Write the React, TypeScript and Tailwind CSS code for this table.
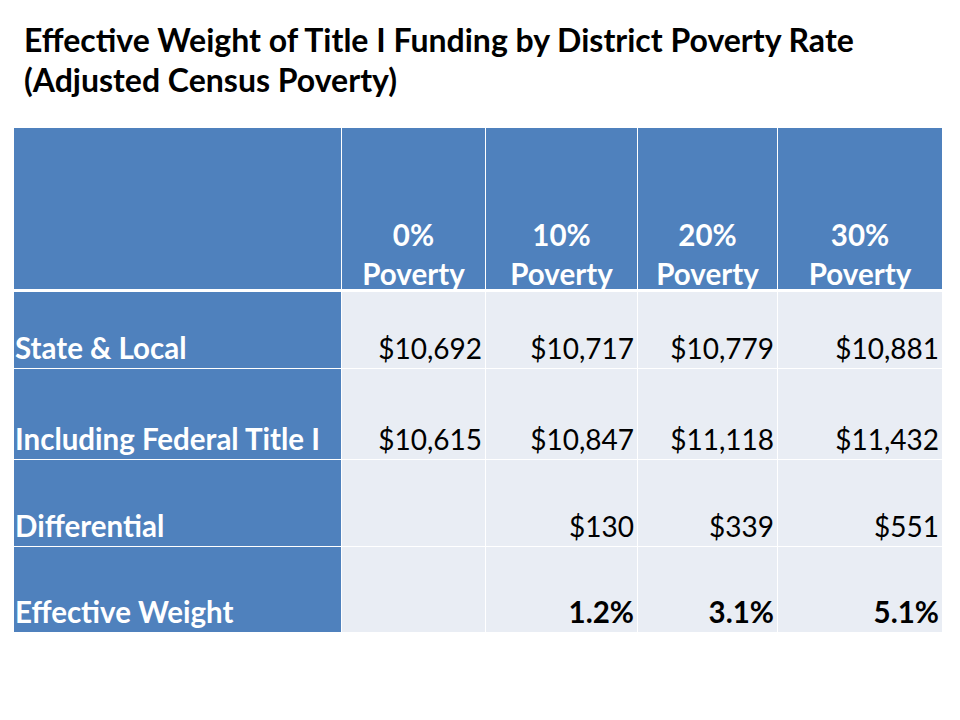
const cols = ["0%", "10%", "20%", "30%"];

type Row = {
  label: string;
  values: string[];
  height: string;
  bold?: boolean;
};

const rows: Row[] = [
  { label: "State & Local", values: ["$10,692", "$10,717", "$10,779", "$10,881"], height: "h-[76px]" },
  { label: "Including Federal Title I", values: ["$10,615", "$10,847", "$11,118", "$11,432"], height: "h-[90px]" },
  { label: "Differential", values: ["", "$130", "$339", "$551"], height: "h-[86px]" },
  { label: "Effective Weight", values: ["", "1.2%", "3.1%", "5.1%"], height: "h-[85px]", bold: true },
];

const grid = "grid grid-cols-[327px_143px_151px_139px_164px] gap-x-px";

export default function App() {
  return (
    <div className="w-[960px] h-[720px] bg-white font-['Lato','Liberation_Sans',sans-serif]">
      {/* title */}
      <h1 className="pl-[24px] pt-[20px] text-[32px] leading-[40px] font-bold text-black whitespace-nowrap">
        Effective Weight of Title I Funding by District Poverty Rate
        <br />
        (Adjusted Census Poverty)
      </h1>

      {/* table */}
      <div className="ml-[14px] mt-[28px] w-[928px] bg-white">
        {/* header */}
        <div className={grid}>
          <div className="h-[161px] bg-[#4f81bd]" />
          {cols.map((c) => (
            <div
              key={c}
              className="h-[161px] bg-[#4f81bd] flex flex-col justify-end items-center text-white font-bold text-[29.5px] leading-[39px]"
            >
              <div className="-mb-[4px] text-center">
                {c}
                <br />
                Poverty
              </div>
            </div>
          ))}
        </div>

        {/* body */}
        <div className="mt-[3px] flex flex-col gap-y-px">
          {rows.map((r) => (
            <div key={r.label} className={grid}>
              <div
                className={`${r.height} bg-[#4f81bd] flex items-end pl-[1px] pb-[3px] text-white font-bold text-[29.5px] leading-[34px] whitespace-nowrap`}
              >
                {r.label}
              </div>
              {r.values.map((v, i) => (
                <div
                  key={i}
                  className={`${r.height} bg-[#e9edf4] flex items-end justify-end pr-[3px] pb-[3px] text-black leading-[34px] ${
                    r.bold ? "font-bold text-[29.5px]" : "text-[28px]"
                  }`}
                >
                  {v}
                </div>
              ))}
            </div>
          ))}
        </div>
      </div>
    </div>
  );
}
